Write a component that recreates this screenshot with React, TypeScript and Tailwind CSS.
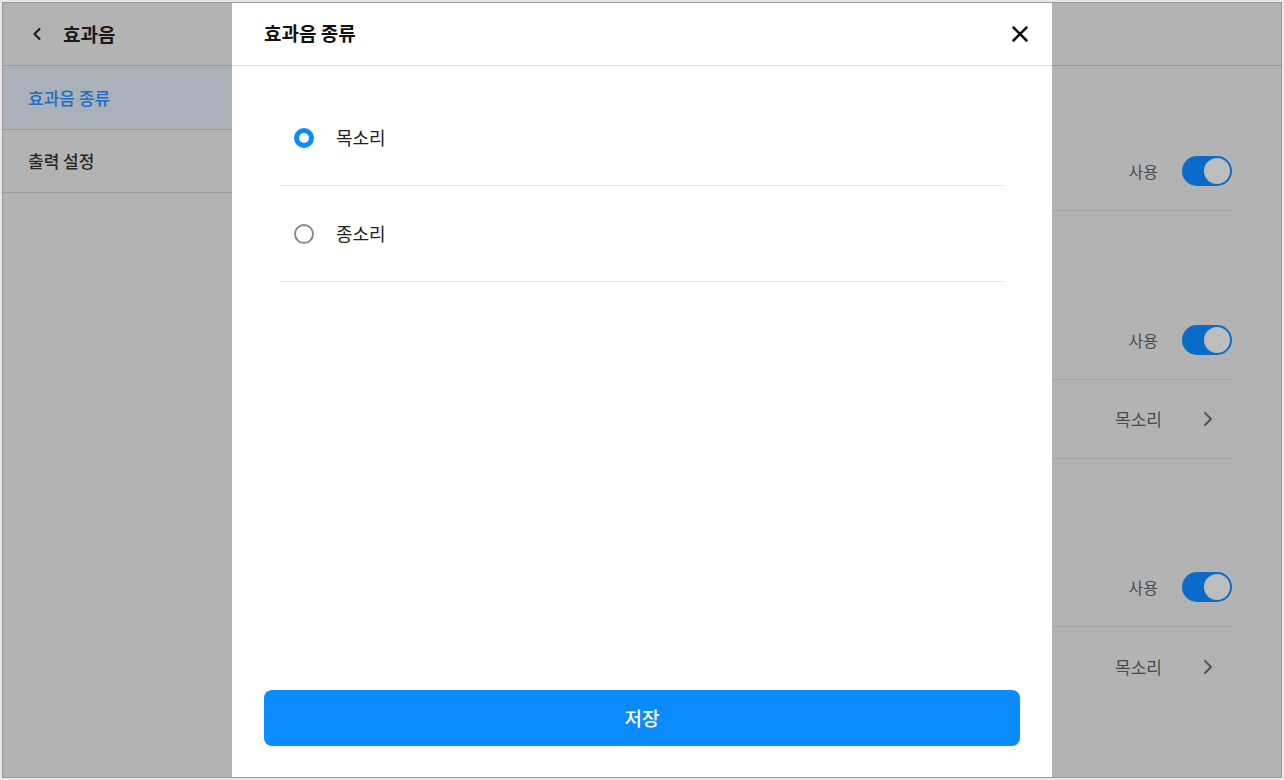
import React from "react";

const font = { fontFamily: '"Noto Sans CJK KR", "Noto Sans", sans-serif' };

function Toggle() {
  return (
    <div className="w-[50px] h-[30px] rounded-full bg-[#0a6cc8] flex items-center justify-end pr-[2px]">
      <div className="w-[26px] h-[26px] rounded-full bg-[#bdbdbd]" />
    </div>
  );
}

function ToggleRow() {
  return (
    <div className="h-[79px] border-b border-[#a6a6a6] flex items-center justify-between">
      <span className="text-[16px] text-[#2a2a2a]">설정</span>
      <div className="flex items-center gap-[24px]">
        <span className="text-[16px] text-[#4a4a4a]">사용</span>
        <Toggle />
      </div>
    </div>
  );
}

function SelectRow({ border = true }: { border?: boolean }) {
  return (
    <div className={`h-[79px] flex items-center justify-between ${border ? "border-b border-[#a6a6a6]" : ""}`}>
      <span className="text-[16px] text-[#2a2a2a]">종류</span>
      <div className="flex items-center gap-[34px] pr-[12px]">
        <span className="text-[17px] text-[#4a4a4a]">목소리</span>
        <svg width="24" height="24" viewBox="0 0 24 24" fill="none" stroke="#555" strokeWidth="2" strokeLinecap="round" strokeLinejoin="round">
          <polyline points="9 18 15 12 9 6" />
        </svg>
      </div>
    </div>
  );
}

function Radio({ checked }: { checked: boolean }) {
  return checked ? (
    <div className="w-[20px] h-[20px] rounded-full border-[5px] border-[#0a8cff] bg-white" />
  ) : (
    <div className="w-[20px] h-[20px] rounded-full border-2 border-[#8a8a8a] bg-white" />
  );
}

export default function App() {
  return (
    <div className="w-[1284px] h-[780px] bg-[#e8e8e8] p-[2px]" style={font}>
      <div className="relative w-[1280px] h-[776px] bg-[#b3b3b3] border border-[#9a9a9a] flex flex-col overflow-hidden">
        {/* Header */}
        <div className="h-[63px] border-b border-[#9c9c9c] flex items-center shrink-0">
          <div className="w-[60px] flex items-center pl-[24px]">
            <svg width="20" height="20" viewBox="0 0 24 24" fill="none" stroke="#1f1f1f" strokeWidth="2.6" strokeLinecap="round" strokeLinejoin="round">
              <polyline points="15 18 9 12 15 6" />
            </svg>
          </div>
          <span className="text-[19px] font-bold text-[#1a1a1a]">효과음</span>
        </div>
        {/* Body */}
        <div className="flex flex-1">
          <div className="w-[229px] flex flex-col">
            <div className="h-[64px] bg-[#aab1b8] border-b border-[#9c9c9c] flex items-center pl-[25px]">
              <span className="text-[17px] font-medium text-[#1a6ec8]">효과음 종류</span>
            </div>
            <div className="h-[63px] border-b border-[#9c9c9c] flex items-center pl-[25px]">
              <span className="text-[17px] font-medium text-[#262626]">출력 설정</span>
            </div>
          </div>
          <div className="flex-1 flex flex-col pl-[40px] pr-[49px]">
            <div className="h-[66px] flex items-end pb-[8px] text-[16px] font-bold text-[#222]">효과음 종류</div>
            <ToggleRow />
            <div className="h-[90px] flex items-end pb-[8px] text-[16px] font-bold text-[#222]">출력 설정</div>
            <ToggleRow />
            <SelectRow />
            <div className="h-[89px] flex items-end pb-[8px] text-[16px] font-bold text-[#222]">알림 설정</div>
            <ToggleRow />
            <SelectRow border={false} />
          </div>
        </div>

        {/* Modal */}
        <div className="absolute left-[229px] top-[-1px] bottom-[-1px] w-[820px] bg-white flex flex-col">
          <div className="h-[64px] border-b border-[#e0e0e0] flex items-center justify-between pl-[32px] pr-[19px] shrink-0">
            <span className="text-[19px] font-bold text-[#111]">효과음 종류</span>
            <svg width="26" height="26" viewBox="0 0 24 24" fill="none" stroke="#111" strokeWidth="2.3" strokeLinecap="round" strokeLinejoin="round">
              <line x1="18" y1="6" x2="6" y2="18" />
              <line x1="6" y1="6" x2="18" y2="18" />
            </svg>
          </div>
          <div className="flex-1 px-[48px] pt-[24px]">
            <div className="h-[96px] border-b border-[#e6e6e6] flex items-center pl-[14px] gap-[22px]">
              <Radio checked />
              <span className="text-[18px] text-[#222]">목소리</span>
            </div>
            <div className="h-[96px] border-b border-[#e6e6e6] flex items-center pl-[14px] gap-[22px]">
              <Radio checked={false} />
              <span className="text-[18px] text-[#222]">종소리</span>
            </div>
          </div>
          <div className="px-[32px] pb-[32px]">
            <button className="w-full h-[56px] rounded-[8px] bg-[#0a8cff] text-white text-[19px] font-medium flex items-center justify-center">
              저장
            </button>
          </div>
        </div>
      </div>
    </div>
  );
}
